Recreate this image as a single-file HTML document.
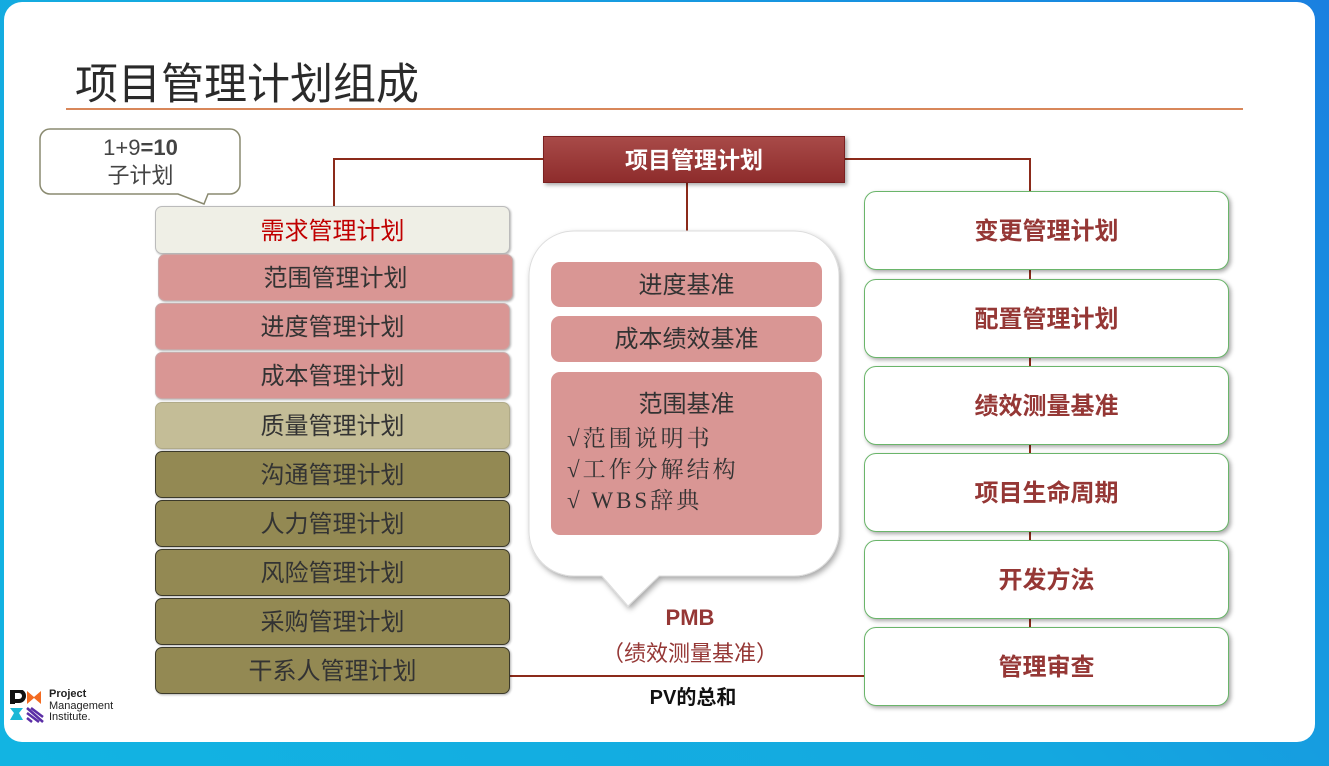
<!DOCTYPE html>
<html><head><meta charset="utf-8"><style>
*{margin:0;padding:0;box-sizing:border-box}
body{width:1329px;height:766px;overflow:hidden;position:relative;font-family:"Liberation Sans","Noto Sans CJK SC",sans-serif;background:linear-gradient(45deg,#12b4e2 0%,#14a8e0 50%,#1a80e0 100%)}
.card{position:absolute;left:4px;top:2px;width:1311px;height:740px;background:#fff;border-radius:18px}
.a{position:absolute}
.t{position:absolute;left:75px;top:50px;font-size:43px;color:#2a2a2a;letter-spacing:0px}
.hl{position:absolute;left:66px;top:108px;width:1177px;height:2px;background:#d8875a}
.ln{position:absolute;background:#8b2a1a}
.ls{position:absolute;left:155px;width:355px;border:1px solid #555;border-radius:7px;font-size:24px;color:#333;text-align:center;box-shadow:1px 1px 2px rgba(0,0,0,.3)}
.pk{background:#d99694;border-color:#c9a9a8}
.ol{background:#938953;border-color:#3c3a2a}
.rb{position:absolute;left:864px;width:365px;height:79px;border:1.5px solid #6ab56a;border-radius:12px;background:#fff;font-size:24px;font-weight:bold;color:#953735;text-align:center;line-height:80px;box-shadow:2px 2px 4px rgba(0,0,0,.35)}
.ib{position:absolute;left:551px;width:271px;background:#d99694;border-radius:9px;font-size:24px;color:#333;text-align:center}
</style></head><body>
<div class="card"></div>
<div class="t">项目管理计划组成</div>
<div class="hl"></div>
<svg class="a" style="left:38px;top:126px" width="210" height="84"><path d="M12 3H192a10 10 0 0 1 10 10V58a10 10 0 0 1-10 10H170L166 78L140 68H12A10 10 0 0 1 2 58V13A10 10 0 0 1 12 3Z" fill="#fff" stroke="#8a8a70" stroke-width="1.5"/></svg>
<div class="a" style="left:41px;top:134px;width:199px;text-align:center;font-size:22px;color:#444;line-height:28px">1+9<b>=10</b><br>子计划</div>
<div class="ln" style="left:333px;top:158px;width:210px;height:2px"></div>
<div class="ln" style="left:333px;top:158px;width:2px;height:48px"></div>
<div class="ln" style="left:845px;top:158px;width:186px;height:2px"></div>
<div class="ln" style="left:1029px;top:158px;width:2px;height:33px"></div>
<div class="ln" style="left:1029px;top:268px;width:2px;height:360px"></div>
<div class="ln" style="left:686px;top:183px;width:2px;height:48px"></div>
<div class="ln" style="left:510px;top:675px;width:355px;height:2px"></div>
<div class="a" style="left:543px;top:136px;width:302px;height:47px;background:linear-gradient(#a84a48,#8e2c2c);border:1px solid #7a2020;box-shadow:2px 2px 4px rgba(0,0,0,.35);color:#fff;font-weight:bold;font-size:23px;text-align:center;line-height:46px">项目管理计划</div>
<div class="ls" style="top:206px;height:48px;line-height:49px;background:#efefe6;border-color:#bbb;color:#c00000">需求管理计划</div>
<div class="ls pk" style="left:158px;top:254px;height:47px;line-height:48px">范围管理计划</div>
<div class="ls pk" style="top:303px;height:47px;line-height:48px">进度管理计划</div>
<div class="ls pk" style="top:352px;height:47px;line-height:48px">成本管理计划</div>
<div class="ls" style="top:402px;height:47px;line-height:48px;background:#c4bd97;border-color:#b0aa88">质量管理计划</div>
<div class="ls ol" style="top:451px;height:47px;line-height:48px">沟通管理计划</div>
<div class="ls ol" style="top:500px;height:47px;line-height:48px">人力管理计划</div>
<div class="ls ol" style="top:549px;height:47px;line-height:48px">风险管理计划</div>
<div class="ls ol" style="top:598px;height:47px;line-height:48px">采购管理计划</div>
<div class="ls ol" style="top:647px;height:47px;line-height:48px">干系人管理计划</div>
<svg class="a" style="left:524px;top:226px" width="330" height="390"><defs><filter id="f"><feDropShadow dx="2" dy="3" stdDeviation="3" flood-opacity=".35"/></filter></defs><path d="M50 5H270a45 45 0 0 1 45 45V305a45 45 0 0 1-45 45H135L104 380L78 350H50A45 45 0 0 1 5 305V50A45 45 0 0 1 50 5Z" fill="#fff" stroke="#ddd" filter="url(#f)"/></svg>
<div class="ib" style="top:262px;height:45px;line-height:47px">进度基准</div>
<div class="ib" style="top:316px;height:46px;line-height:48px">成本绩效基准</div>
<div class="ib" style="top:372px;height:163px"><div style="margin-top:12px">范围基准</div><div style="text-align:left;padding-left:16px;font-family:'Liberation Serif','Noto Serif CJK SC',serif;font-size:23px;line-height:31px;margin-top:4px;letter-spacing:3px">√范围说明书<br>√工作分解结构<br>√ WBS辞典</div></div>
<div class="a" style="left:560px;top:605px;width:260px;text-align:center;font-size:22px;font-weight:bold;color:#953735">PMB</div>
<div class="a" style="left:560px;top:636px;width:260px;text-align:center;font-size:22px;color:#953735">（绩效测量基准）</div>
<div class="a" style="left:560px;top:681px;width:266px;text-align:center;font-size:20px;font-weight:bold;color:#111">PV的总和</div>
<div class="rb" style="top:191px">变更管理计划</div>
<div class="rb" style="top:279px">配置管理计划</div>
<div class="rb" style="top:366px">绩效测量基准</div>
<div class="rb" style="top:453px">项目生命周期</div>
<div class="rb" style="top:540px">开发方法</div>
<div class="rb" style="top:627px">管理审查</div>
<svg class="a" style="left:9px;top:690px" width="36" height="34"><rect x="1" y="1" width="5" height="13" fill="#111"/><path d="M1 1H10a5 5 0 0 1 0 10H6" fill="none" stroke="#111" stroke-width="4"/><path d="M18 1L25 7L32 1V14L25 8L18 14Z" fill="#f36b21"/><path d="M1 18H14L10 23L14 30H1L5 23Z" fill="#1bb8d6"/><path d="M18 18L34 32M18 23L30 32M22 18L34 27M18 28L23 32" stroke="#5b2ea6" stroke-width="2.5"/></svg>
<div class="a" style="left:49px;top:689px;font-size:11px;line-height:11.5px;color:#222"><b>Project</b><br>Management<br>Institute.</div>
</body></html>
